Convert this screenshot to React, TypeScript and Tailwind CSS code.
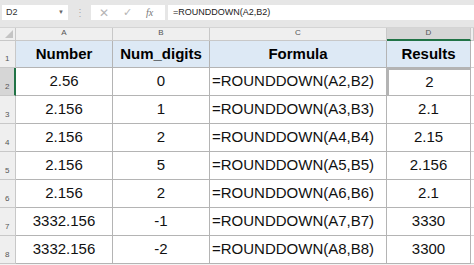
const rows: [string, string, string, string][] = [
  ["2.56", "0", "=ROUNDDOWN(A2,B2)", "2"],
  ["2.156", "1", "=ROUNDDOWN(A3,B3)", "2.1"],
  ["2.156", "2", "=ROUNDDOWN(A4,B4)", "2.15"],
  ["2.156", "5", "=ROUNDDOWN(A5,B5)", "2.156"],
  ["2.156", "2", "=ROUNDDOWN(A6,B6)", "2.1"],
  ["3332.156", "-1", "=ROUNDDOWN(A7,B7)", "3330"],
  ["3332.156", "-2", "=ROUNDDOWN(A8,B8)", "3300"],
];

const colHead = "flex items-end justify-center pb-[1px] text-[8px] text-[#555] bg-[#efefef] border-r border-b border-[#c8c8c8]";
const cell = "flex items-center border-r border-b border-[#b4b4b4] text-[15px] text-[#111]";

export default function App() {
  return (
    <div className="w-[474px] h-[265px] overflow-hidden bg-[#f3f3f3] font-['Liberation_Sans',Arial,sans-serif]">
      {/* formula bar */}
      <div className="h-[28px] bg-[#e6e6e6] flex items-start pt-[5px] border-b border-[#d4d4d4]">
        <div className="ml-[2px] w-[66px] h-[15px] bg-white flex items-center justify-between px-[4px] text-[9px] text-[#333]">
          <span>D2</span>
          <span className="text-[6px] text-[#666]">▼</span>
        </div>
        <div className="w-[23px] h-[15px] flex items-center justify-center text-[10px] text-[#aaa]">⋮</div>
        <div className="w-[74px] h-[15px] bg-white flex items-center text-[#b5b5b5]">
          <span className="ml-[8px] text-[12px] leading-none">✕</span>
          <span className="ml-[14px] text-[11px] leading-none">✓</span>
          <span className="ml-[14px] text-[10px] italic font-['Liberation_Serif',serif] text-[#777]">fx</span>
        </div>
        <div className="ml-[3px] flex-1 h-[15px] bg-white flex items-center pl-[5px] text-[9px] text-[#222]">
          =ROUNDDOWN(A2,B2)
        </div>
      </div>

      <div className="grid grid-cols-[16px_97px_97px_177px_84px_1fr] grid-rows-[13px_27px_repeat(7,28px)]">
        {/* column letters */}
        <div className="relative bg-[#efefef] border-r border-b border-[#c8c8c8]">
          <svg className="absolute right-[2px] bottom-[2px]" width="8" height="8" viewBox="0 0 8 8">
            <polygon points="8,0 8,8 0,8" fill="#c4c4c4" />
          </svg>
        </div>
        <div className={colHead}>A</div>
        <div className={colHead}>B</div>
        <div className={colHead}>C</div>
        <div className="flex items-end justify-center text-[8px] text-[#555] bg-[#d6d6d6] border-r border-[#c8c8c8] border-b-2 border-b-[#217346]">D</div>
        <div className={colHead}></div>

        {/* header row */}
        <div className="flex items-end pl-[5px] pb-[2px] text-[8px] text-[#555] bg-[#efefef] border-r border-b border-[#c8c8c8]">1</div>
        {["Number", "Num_digits", "Formula", "Results"].map((h) => (
          <div key={h} className={`${cell} justify-center font-bold text-black bg-[#dde9f5]`}>
            {h}
          </div>
        ))}
        <div className="bg-white border-b border-[#d4d4d4]"></div>

        {rows.map((r, i) => {
          const sel = i === 0;
          return [
            <div
              key={`h${i}`}
              className={`flex items-end pl-[5px] pb-[2px] text-[8px] text-[#555] border-b border-[#c8c8c8] ${
                sel ? "bg-[#d6d6d6] border-r-2 border-r-[#217346]" : "bg-[#efefef] border-r"
              }`}
            >
              {i + 2}
            </div>,
            <div key={`a${i}`} className={`${cell} justify-center bg-white`}>{r[0]}</div>,
            <div key={`b${i}`} className={`${cell} justify-center bg-white`}>{r[1]}</div>,
            <div key={`c${i}`} className={`${cell} pl-[2px] text-[15.5px] bg-white`}>{r[2]}</div>,
            <div
              key={`d${i}`}
              className={`${cell} justify-center bg-white ${sel ? "border-2 border-[#217346]" : ""}`}
            >
              {r[3]}
            </div>,
            <div key={`e${i}`} className="bg-white border-b border-[#d4d4d4]"></div>,
          ];
        })}
      </div>
    </div>
  );
}
